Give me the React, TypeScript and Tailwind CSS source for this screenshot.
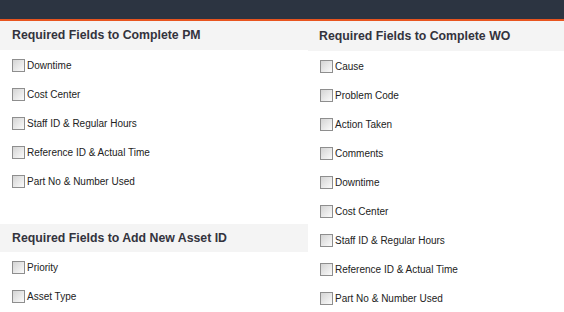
const pmFields = ["Downtime", "Cost Center", "Staff ID & Regular Hours", "Reference ID & Actual Time", "Part No & Number Used"];
const assetFields = ["Priority", "Asset Type"];
const woFields = ["Cause", "Problem Code", "Action Taken", "Comments", "Downtime", "Cost Center", "Staff ID & Regular Hours", "Reference ID & Actual Time", "Part No & Number Used"];

function Check({ label }: { label: string }) {
  return (
    <label className="flex h-[29px] items-center pt-[1px] cursor-pointer">
      <span className="h-[13px] w-[13px] shrink-0 border border-[#8e8e8e] bg-linear-to-br from-[#d4d4d4] to-[#fbfbfb]"></span>
      <span className="pl-[2px] text-[10px] text-[#222]">{label}</span>
    </label>
  );
}

function Header({ title, h }: { title: string; h: string }) {
  return (
    <div className={`flex items-center bg-[#f4f4f4] px-3 ${h}`}>
      <h2 className="text-[12.3px] font-bold text-[#33333d]">{title}</h2>
    </div>
  );
}

export default function App() {
  return (
    <div className="h-[312px] w-[564px] overflow-hidden bg-white font-['Liberation_Sans',Arial,sans-serif]">
      <div className="h-[21px] border-b-2 border-[#e8541f] bg-[#2c3441]"></div>
      <div className="flex">
        <div className="w-[308px]">
          <Header title="Required Fields to Complete PM" h="h-[29px]" />
          <div className="px-3">
            {pmFields.map((f) => (
              <Check key={f} label={f} />
            ))}
          </div>
          <div className="h-[29px]"></div>
          <Header title="Required Fields to Add New Asset ID" h="h-[28px]" />
          <div className="px-3">
            {assetFields.map((f) => (
              <Check key={f} label={f} />
            ))}
          </div>
        </div>
        <div className="flex-1">
          <Header title="Required Fields to Complete WO" h="h-[30px] pl-[11px]" />
          <div className="border-b border-[#e6e6e6] px-3">
            {woFields.map((f) => (
              <Check key={f + "wo"} label={f} />
            ))}
          </div>
        </div>
      </div>
    </div>
  );
}
